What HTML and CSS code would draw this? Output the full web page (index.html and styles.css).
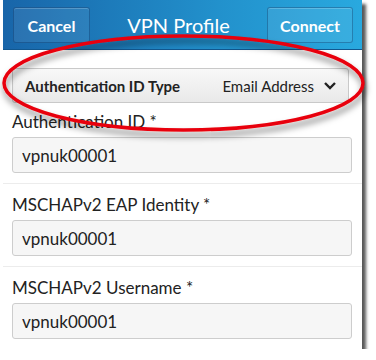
FILE: index.html
```html
<!DOCTYPE html>
<html lang="en">

<head>
    <meta charset="UTF-8">
    <meta name="viewport" content="width=device-width, initial-scale=1.0">
    <title>VPN Profile</title>
    <link rel="stylesheet" href="styles.css">
</head>

<body>
    <div class="screen">
        <div class="title-bar">
            <button type="button" class="bar-btn">Cancel</button>
            <h1 class="bar-title">VPN Profile</h1>
            <button type="button" class="bar-btn">Connect</button>
        </div>

        <div class="form-body">
            <div class="dropdown">
                <span class="dropdown-label">Authentication ID Type</span>
                <span class="dropdown-value">Email Address
                    <svg class="chevron" width="14" height="10" viewBox="0 0 14 10">
                        <path d="M2 2 L7 7 L12 2" fill="none" stroke="#222" stroke-width="2.4" />
                    </svg>
                </span>
            </div>

            <div class="field">
                <label class="field-label" for="authId">Authentication ID *</label>
                <input type="text" class="field-input" id="authId" value="vpnuk00001">
            </div>
            <div class="divider"></div>

            <div class="field">
                <label class="field-label" for="eapId">MSCHAPv2 EAP Identity *</label>
                <input type="text" class="field-input" id="eapId" value="vpnuk00001">
            </div>
            <div class="divider"></div>

            <div class="field">
                <label class="field-label" for="username">MSCHAPv2 Username *</label>
                <input type="text" class="field-input" id="username" value="vpnuk00001">
            </div>
        </div>
    </div>

    <!-- red callout drawn over the screenshot -->
    <svg class="callout" width="376" height="360" viewBox="0 0 376 360">
        <defs>
            <filter id="ringShadow" x="-10%" y="-30%" width="120%" height="160%">
                <feDropShadow dx="1" dy="5" stdDeviation="3" flood-color="#000" flood-opacity="0.5" />
            </filter>
        </defs>
        <ellipse cx="183.5" cy="83" rx="179.5" ry="47" fill="none" stroke="#e8000b" stroke-width="3.5"
            filter="url(#ringShadow)" />
    </svg>
</body>

</html>
```

FILE: styles.css
```css
body {
    margin: 0;
    background-color: #fff;
    font-family: Lato, "Open Sans", sans-serif;
    color: #222;
}

.screen {
    width: 359px;
    margin-left: 3px;
    background-color: #fff;
    box-shadow: 4px 4px 3px rgba(0, 0, 0, 0.65);
}

.title-bar {
    height: 50px;
    padding: 0 9px 0 10px;
    display: flex;
    align-items: center;
    justify-content: space-between;
    background: linear-gradient(to right, #1865a9, #2291cc 60%, #29a9df);
    box-shadow: inset 0 -1px 0 #12578f;
}

.bar-btn {
    height: 36px;
    min-width: 77px;
    padding: 0 12px;
    font-family: inherit;
    font-size: 16px;
    font-weight: bold;
    color: #fff;
    background: rgba(255, 255, 255, 0.08);
    border: 1px solid rgba(0, 40, 90, 0.35);
    border-radius: 3px;
    box-shadow: inset 0 1px 0 rgba(255, 255, 255, 0.2);
}

.bar-title {
    margin: 0;
    font-size: 20px;
    font-weight: normal;
    color: #fff;
}

.form-body {
    padding: 18px 0 10px;
}

.dropdown {
    height: 33px;
    margin: 0 13px 0 9px;
    padding: 0 11px 0 12px;
    display: flex;
    align-items: center;
    justify-content: space-between;
    background: linear-gradient(#f8f8f8, #e9e9e9);
    border: 1px solid #c9c9c9;
    border-radius: 3px;
    font-size: 15px;
}

.dropdown-label {
    font-weight: bold;
}

.dropdown-value {
    display: flex;
    align-items: center;
    gap: 9px;
}

.field {
    padding: 9px 10px 0 9px;
}

.field-label {
    display: block;
    height: 20px;
    line-height: 20px;
    margin-bottom: 5px;
    font-size: 17px;
}

.field-input {
    display: block;
    box-sizing: border-box;
    width: 100%;
    height: 36px;
    padding: 0 9px;
    font-family: inherit;
    font-size: 17px;
    color: #222;
    background-color: #f6f6f6;
    border: 1px solid #cdcdcd;
    border-radius: 3px;
}

.divider {
    height: 1px;
    margin: 10px 0 2px;
    background-color: #ececec;
}

.callout {
    position: absolute;
    left: 0;
    top: 0;
    pointer-events: none;
}
```
